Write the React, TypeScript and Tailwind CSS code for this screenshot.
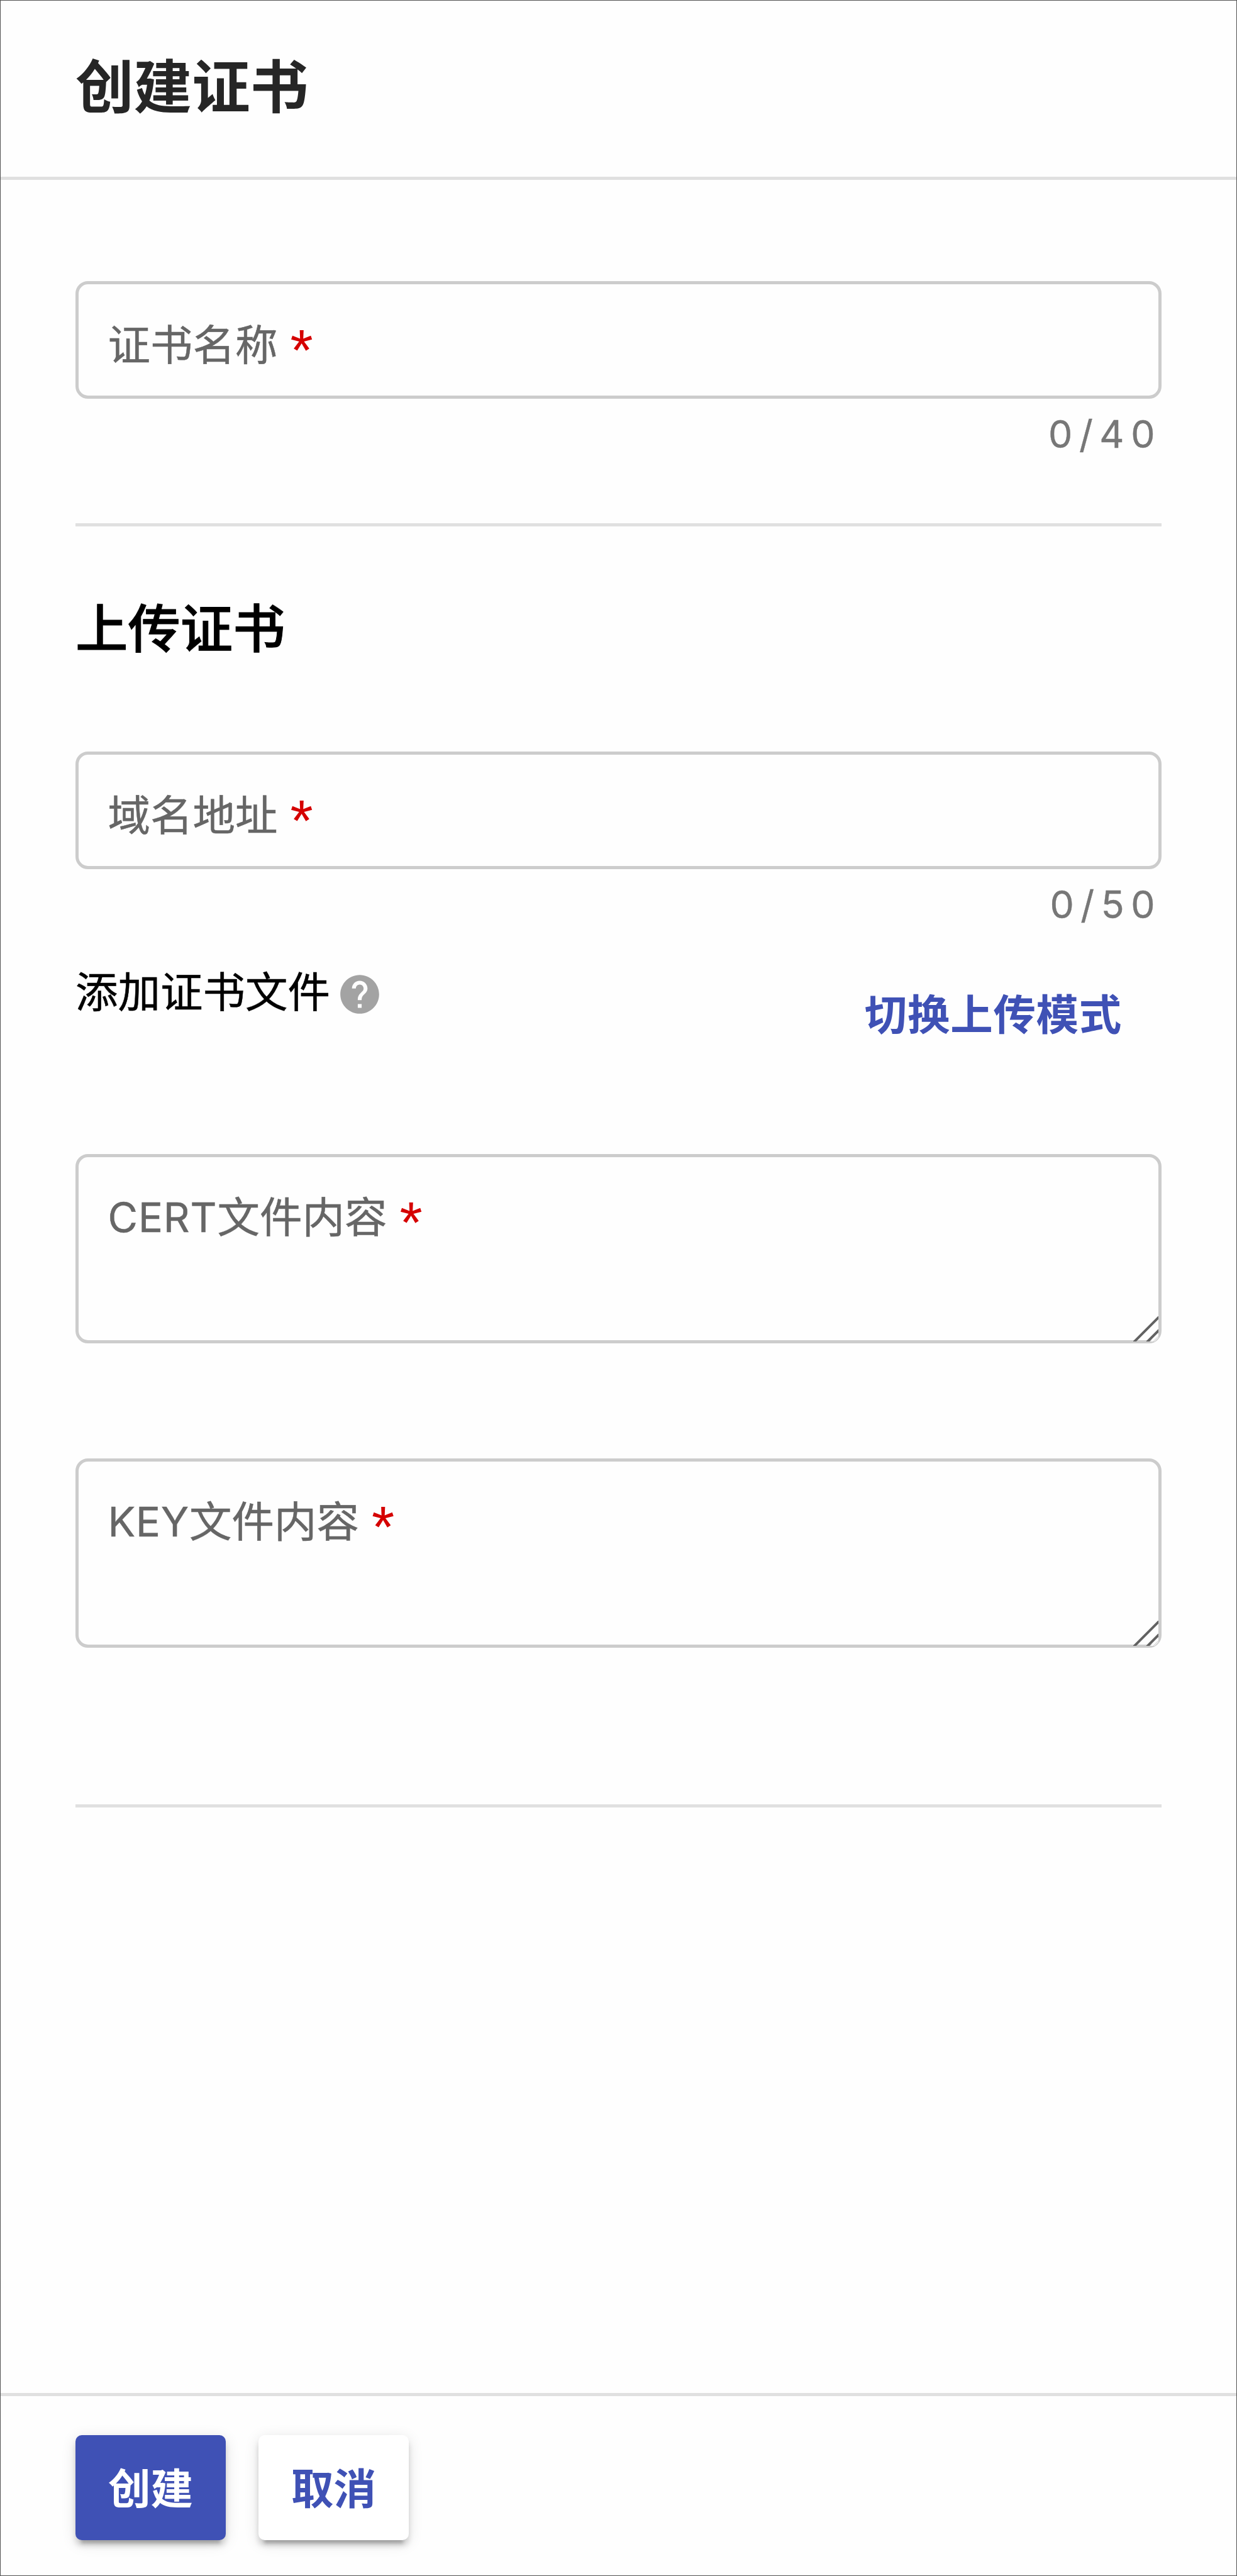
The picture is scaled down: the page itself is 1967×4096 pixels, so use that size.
import type { ReactNode } from "react";

function Label({ children }: { children: ReactNode }) {
  return (
    <div className="h-[80px] text-[67.5px] leading-[80px] whitespace-nowrap text-[#666] [-webkit-text-stroke:0.5px_#666]">
      {children}
      <span className="ml-[20px] inline-block h-[40px] align-[-16px] font-['Liberation_Sans',sans-serif] text-[93px] leading-[40px] text-[#d50000] [-webkit-text-stroke:0px]">
        *
      </span>
    </div>
  );
}

function TextField({ label, counter }: { label: string; counter: string }) {
  return (
    <div>
      <div className="flex h-[187px] items-center rounded-[20px] border-[5px] border-[#ccc] pt-[16px] pl-[46.5px]">
        <Label>{label}</Label>
      </div>
      <div className="mt-[16px] flex h-[80px] items-center justify-end text-[60.8px] leading-[80px] tracking-[10.5px] text-[#777] [-webkit-text-stroke:0.4px_#777]">
        {counter}
      </div>
    </div>
  );
}

function TextArea({ prefix, label }: { prefix: string; label: string }) {
  return (
    <div className="relative h-[301px] rounded-[20px] border-[5px] border-[#ccc] pt-[56px] pl-[46.5px]">
      <Label>
        <span className="align-[1px] text-[65px] leading-none tracking-[0.9px]">{prefix}</span>
        {label}
      </Label>
      <svg className="absolute right-0 -bottom-[2px]" width="40" height="40" viewBox="0 0 40 40" fill="none">
        <path d="M27 40L40 27V34L34 40Z" fill="#fefefe" />
        <path d="M32 40L40 32" stroke="#ddd" strokeWidth="1.5" />
        <path d="M41 1L1 41M41 22L22 41" stroke="#626262" strokeWidth="4" />
      </svg>
    </div>
  );
}

function HelpIcon() {
  return (
    <svg className="mt-[6px] ml-[10px] size-[74px]" viewBox="0 0 24 24" fill="#a3a3a3">
      <path d="M12 2C6.48 2 2 6.48 2 12s4.48 10 10 10 10-4.48 10-10S17.52 2 12 2zm1 17h-2v-2h2v2zm2.07-7.75l-.9.92C13.45 12.9 13 13.5 13 15h-2v-.5c0-1.1.45-2.1 1.17-2.83l1.24-1.26c.37-.36.59-.86.59-1.41 0-1.1-.9-2-2-2s-2 .9-2 2H8c0-2.21 1.79-4 4-4s4 1.79 4 4c0 .88-.36 1.68-.93 2.25z" />
    </svg>
  );
}

export default function App() {
  return (
    <div className="flex h-[4096px] w-[1967px] flex-col border border-[#515151] bg-[#fefefe] font-['Inter','Noto_Sans_CJK_SC',sans-serif]">
      <header className="flex h-[285px] shrink-0 items-center border-b-[5px] border-[#e0e0e0] px-[119px] pb-[6px]">
        <h1 className="text-[92.6px] leading-[120px] font-semibold text-[#262626]">创建证书</h1>
      </header>
      <main className="flex flex-1 flex-col px-[119px] pt-[161px]">
        <TextField label="证书名称" counter="0/40" />
        <hr className="mt-[102px] border-t-[5px] border-[#e0e0e0]" />
        <h2 className="mt-[103px] text-[83.4px] leading-[120px] font-medium text-black [-webkit-text-stroke:1px_black]">
          上传证书
        </h2>
        <div className="mt-[135px]">
          <TextField label="域名地址" counter="0/50" />
        </div>
        <div className="mt-[40px] flex h-[120px] justify-between">
          <div className="flex h-[120px] items-center text-[67.5px] leading-[80px] text-black [-webkit-text-stroke:0.5px_black]">
            添加证书文件
            <HelpIcon />
          </div>
          <button className="mt-[36px] mr-[63px] h-[120px] text-[67.5px] leading-[80px] font-semibold tracking-[0.7px] text-[#3f51b5]">
            切换上传模式
          </button>
        </div>
        <div className="mt-[197px] flex flex-col gap-[183px]">
          <TextArea prefix="CERT" label="文件内容" />
          <TextArea prefix="KEY" label="文件内容" />
        </div>
        <hr className="mt-[249px] border-t-[5px] border-[#e0e0e0]" />
      </main>
      <footer className="flex h-[290px] shrink-0 gap-[52px] border-t-[5px] border-[#e0e0e0] px-[119px] pt-[62px]">
        <button className="h-[167px] w-[239px] rounded-[10px] bg-[#3f51b5] pt-[5px] text-[67.5px] leading-[80px] font-semibold text-white shadow-[0_14px_5px_-9px_rgba(0,0,0,0.2),0_9px_9px_0_rgba(0,0,0,0.14),0_5px_23px_0_rgba(0,0,0,0.12)]">
          创建
        </button>
        <button className="h-[167px] w-[239px] rounded-[10px] bg-white pt-[5px] text-[67.5px] leading-[80px] font-semibold text-[#3f51b5] shadow-[0_14px_5px_-9px_rgba(0,0,0,0.2),0_9px_9px_0_rgba(0,0,0,0.14),0_5px_23px_0_rgba(0,0,0,0.12)]">
          取消
        </button>
      </footer>
    </div>
  );
}
